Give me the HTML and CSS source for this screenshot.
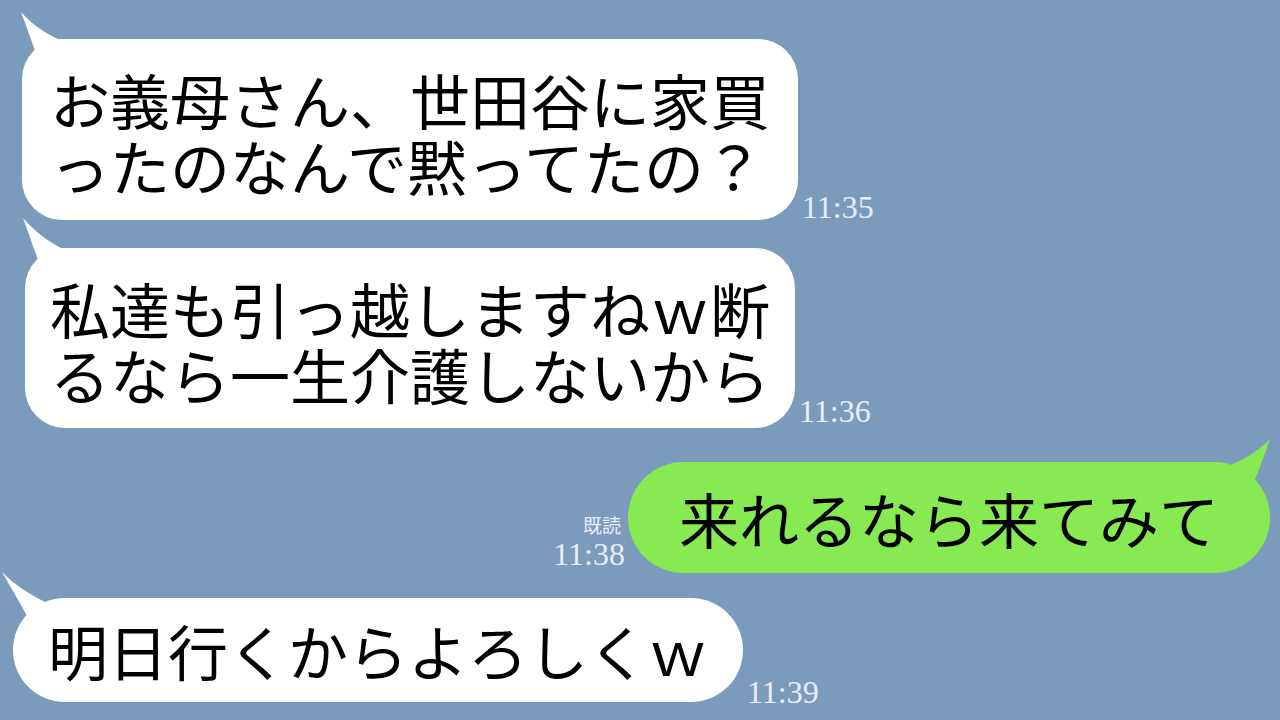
FILE: index.html
```html
<!DOCTYPE html>
<html lang="ja">
<head>
<meta charset="utf-8">
<link rel="stylesheet" href="styles.css">
</head>
<body>
<div class="chat">
  <div class="row row-1">
    <div class="bubble in b1">
      <svg class="tail tail-l" width="1" height="1"><path d="M -1 -27 C 5 -12, 10 4, 16 20 L 45 4 C 28 -3, 12 -12, -1 -27 Z"/></svg>
      <p class="text">お義母さん、世田谷に家買<br>ったのなんで黙ってたの？</p>
    </div>
    <span class="time t1">11:35</span>
  </div>
  <div class="row row-2">
    <div class="bubble in b2">
      <svg class="tail tail-l" width="1" height="1"><path d="M -2 -30 C 4 -14, 10 4, 16 20 L 45 4 C 28 -3, 12 -14, -2 -30 Z"/></svg>
      <p class="text">私達も引っ越しますねｗ断<br>るなら一生介護しないから</p>
    </div>
    <span class="time t2">11:36</span>
  </div>
  <div class="row row-3">
    <div class="meta">
      <span class="read">既読</span>
      <span class="time t3">11:38</span>
    </div>
    <div class="bubble out b3">
      <svg class="tail tail-r" width="1" height="1"><path d="M 1 -23 C -10 -12, -22 -4, -40 4 L -16 22 C -9 6, -4 -9, 1 -23 Z"/></svg>
      <p class="text">来れるなら来てみて</p>
    </div>
  </div>
  <div class="row row-4">
    <div class="bubble in b4">
      <svg class="tail tail-l" width="1" height="1"><path d="M -11 -26 C -2 -10, 8 6, 16 22 L 34 5 C 20 -2, 2 -12, -11 -26 Z"/></svg>
      <p class="text">明日行くからよろしくｗ</p>
    </div>
    <span class="time t4">11:39</span>
  </div>
</div>
</body>
</html>
```
FILE: styles.css
```css
html, body {
  margin: 0;
  padding: 0;
}
body {
  width: 1280px;
  height: 720px;
  overflow: hidden;
  background: #7b9bbd;
  font-family: "Noto Sans CJK JP", "Noto Sans", sans-serif;
}
.chat {
  display: flex;
  flex-direction: column;
}
.row {
  display: flex;
  align-items: flex-end;
}
.row-1 { margin: 39px 0 0 22px; }
.row-2 { margin: 28px 0 0 25px; }
.row-3 { margin: 34px 10px 0 0; justify-content: flex-end; }
.row-4 { margin: 25px 0 0 13px; }

.bubble {
  position: relative;
  background: #ffffff;
}
.bubble.out {
  background: #87ea52;
}
.text {
  margin: 0;
  font-size: 60px;
  line-height: 66px;
  color: #000;
  white-space: nowrap;
}
.b1 { padding: 27px 28px 22px; border-radius: 40px; }
.b2 { padding: 27px 25px 21px; border-radius: 40px; }
.b3 { padding: 23px 51px 22px; border-radius: 56px; }
.b4 { padding: 19px 35px 19px; border-radius: 52px; }

.tail {
  position: absolute;
  top: 0;
  overflow: visible;
}
.tail-l { left: 0; fill: #ffffff; }
.tail-r { right: 0; fill: #87ea52; }

.time {
  font-family: "Liberation Serif", serif;
  font-size: 32px;
  line-height: 32px;
  color: #e6eef8;
  margin-left: 4px;
}
.t1 { margin-bottom: -3px; }
.t2 { margin-bottom: 1px; }
.t4 { margin-bottom: -6px; }

.meta {
  display: flex;
  flex-direction: column;
  align-items: flex-end;
  margin-right: 3px;
  margin-bottom: 3px;
}
.meta .time { margin-left: 0; }
.read {
  font-size: 19px;
  line-height: 22px;
  color: #e6eef8;
  margin-right: 4px;
  margin-bottom: 2px;
}
```
